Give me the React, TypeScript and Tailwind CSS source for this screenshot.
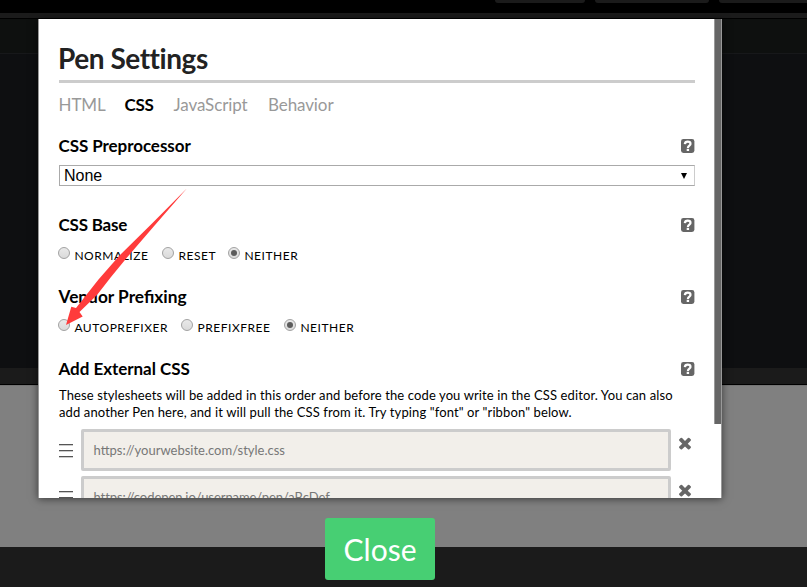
import React from 'react';

const LATO = "font-['Lato','Open_Sans',sans-serif]";

function HelpIcon() {
  return (
    <svg className="block h-[14px] w-[14px]" viewBox="0 0 14 14" aria-hidden="true">
      <rect x="0" y="0" width="13.4" height="14" rx="2.4" fill="#666" />
      <path d="M3.8 5.2C4 3.4 5.1 2.7 6.7 2.7C8.5 2.7 9.5 3.6 9.5 4.9C9.5 6.6 6.9 6.6 6.9 8.9" fill="none" stroke="#fff" strokeWidth="2.2" />
      <rect x="5.7" y="9.8" width="2.4" height="2.2" fill="#fff" />
    </svg>
  );
}

function CloseIcon() {
  return (
    <svg className="block h-[18px] w-[18px]" viewBox="0 0 1792 1792" fill="#666" aria-hidden="true">
      <path d="M1490 1322q0 40-28 68l-136 136q-28 28-68 28t-68-28l-294-294-294 294q-28 28-68 28t-68-28l-136-136q-28-28-28-68t28-68l294-294-294-294q-28-28-28-68t28-68l136-136q28-28 68-28t68 28l294 294 294-294q28-28 68-28t68 28l136 136q28 28 28 68t-28 68l-294 294 294 294q28 28 28 68z" />
    </svg>
  );
}

function SectionHeading({ title, spacing }: { title: string; spacing: string }) {
  return (
    <div className="flex h-6 items-center justify-between">
      <h3 className={`-ml-[0.5px] leading-6 font-bold text-black ${spacing}`}>{title}</h3>
      <HelpIcon />
    </div>
  );
}

function Radio({ label, checked = false, className }: { label: string; checked?: boolean; className: string }) {
  return (
    <label className={`flex shrink-0 ${className}`}>
      <span className="mr-1 -ml-[0.6px] flex h-3 w-3 shrink-0 items-center justify-center rounded-full border border-[#a2a2a2] bg-linear-to-b from-[#e9e9e9] to-[#dadada]">
        {checked && <span className="h-[6px] w-[6px] rounded-full bg-[#5c5c5c]" />}
      </span>
      <span className="mt-px text-[12px] leading-4 tracking-[0.54px] whitespace-nowrap text-black">{label}</span>
    </label>
  );
}

function DragHandle() {
  return (
    <div className="mt-[15px] mr-2 flex h-[15px] w-[14px] flex-col gap-[4px]">
      <span className="h-[2px] border-t border-[#555] bg-[#ccc]" />
      <span className="h-[2px] border-t border-[#555] bg-[#ccc]" />
      <span className="h-[2px] border-t border-[#555] bg-[#ccc]" />
    </div>
  );
}

function StylesheetRow({ placeholder, spacing }: { placeholder: string; spacing: string }) {
  return (
    <div className="mb-[5px] flex h-[42px] shrink-0">
      <DragHandle />
      <div className={`flex h-[42px] w-[590px] items-center rounded-[2px] border-[3px] border-[#ccc] bg-[#f2efea] px-[9.5px] pt-[2px] text-[13px] text-[#777] ${spacing}`}>
        {placeholder}
      </div>
      <div className="mt-[5px] ml-[5px]"><CloseIcon /></div>
    </div>
  );
}

function Backdrop() {
  return (
    <div className="flex h-full flex-col">
      <div className="flex h-[13px] items-start justify-end gap-[10px] bg-black">
        <div className="h-[3px] w-[90px] rounded-b-[3px] bg-[#1b1b1b]" />
        <div className="h-[3px] w-[114px] rounded-b-[3px] bg-[#1b1b1b]" />
        <div className="h-[3px] w-[88px] rounded-bl-[3px] bg-[#1b1b1b]" />
      </div>
      <div className="h-[6px] border-b border-black bg-[#1b1b1b]" />
      <div className="h-[35px] border-b border-[#17181a] bg-[#0e100f]" />
      <div className="h-[314px] bg-[#0e0f11]" />
      <div className="h-[17px] border-b border-black bg-[#1b1b1b]" />
      <div className="h-[162px] border-t border-[#747474] bg-[#808080]" />
      <div className="flex-1 bg-[#1b1b1b]" />
    </div>
  );
}

export default function App() {
  return (
    <div className={`relative h-[587px] w-[807px] overflow-hidden ${LATO}`}>
      <Backdrop />
      <div className="absolute top-[19px] left-[38px] flex h-[479px] w-[684px] overflow-hidden border-x border-[#999] bg-white shadow-[0_1px_8px_rgba(0,0,0,0.55)]">
        <div className="ml-[20px] w-[636px] shrink-0">
          <h1 className="h-[64px] border-b-[3px] border-[#ccc] pt-[21px] text-[28px] leading-9 font-bold tracking-[-0.45px] text-[#222] indent-[-1px]">Pen Settings</h1>
          <nav className="flex h-8 pt-[10px] text-[17px] leading-6 tracking-[-0.1px] text-[#999]">
            <span className="-ml-[0.5px] w-[66px]">HTML</span>
            <span className="w-[49px] tracking-[-0.3px] font-bold text-black">CSS</span>
            <span className="w-[94.5px]">JavaScript</span>
            <span>Behavior</span>
          </nav>
          <section className="mt-[19px] h-[79px]">
            <SectionHeading title="CSS Preprocessor" spacing="text-[17px] tracking-[-0.07px]" />
            <div className="mt-[7px] flex h-[21px] items-center justify-between border border-[#aaa] border-r-[#ccc] bg-white pr-[7px] pl-1 font-['Liberation_Sans',Arial,sans-serif] text-[16px] leading-[19px] text-black">
              <span>None</span>
              <svg className="h-[6px] w-[6px]" viewBox="0 0 6 6" aria-hidden="true"><path d="M0 0H6L3 6Z" /></svg>
            </div>
          </section>
          <section className="h-[72px]">
            <SectionHeading title="CSS Base" spacing="text-[17px] tracking-[-0.2px]" />
            <div className="mt-[10px] flex">
              <Radio label="NORMALIZE" className="w-[104px]" />
              <Radio label="RESET" className="w-[66px]" />
              <Radio label="NEITHER" checked className="w-[80px]" />
            </div>
          </section>
          <section className="h-[72px]">
            <SectionHeading title="Vendor Prefixing" spacing="text-[17.3px] tracking-normal" />
            <div className="mt-[10px] flex">
              <Radio label="AUTOPREFIXER" className="w-[123px]" />
              <Radio label="PREFIXFREE" className="w-[103px]" />
              <Radio label="NEITHER" checked className="w-[80px]" />
            </div>
          </section>
          <section>
            <SectionHeading title="Add External CSS" spacing="text-[17px] tracking-[-0.04px]" />
            <p className="mt-[6px] mb-[8px] text-[13px] leading-[17px] tracking-[0.12px] whitespace-nowrap text-black">
              These stylesheets will be added in this order and before the code you write in the CSS editor. You can also<br />
              add another Pen here, and it will pull the CSS from it. Try typing "font" or "ribbon" below.
            </p>
            <StylesheetRow placeholder="https://yourwebsite.com/style.css" spacing="tracking-normal" />
            <StylesheetRow placeholder="https://codepen.io/username/pen/aBcDef" spacing="tracking-[-0.07px]" />
          </section>
        </div>
        <div className="ml-auto h-[405px] w-[7px] shrink-0 border-l border-[#999] bg-[#666]" />
      </div>
      <svg className="absolute top-[185px] left-[60px] h-[145px] w-[132px]" viewBox="60 185 132 145" aria-hidden="true">
        <path d="M187 188.3L155 225L127 257.5L111 277L97 295L79.5 312L82.7 316.5L66 325L71.3 306.7L76 308L98.5 279.5L119.5 255.5L152 223.5Z" fill="#ff3b3b" />
      </svg>
      <button className="absolute top-[518px] left-[325px] h-[62px] w-[110px] rounded-[3px] bg-[#47cf73] text-[30px] leading-[62px] text-white">Close</button>
    </div>
  );
}
